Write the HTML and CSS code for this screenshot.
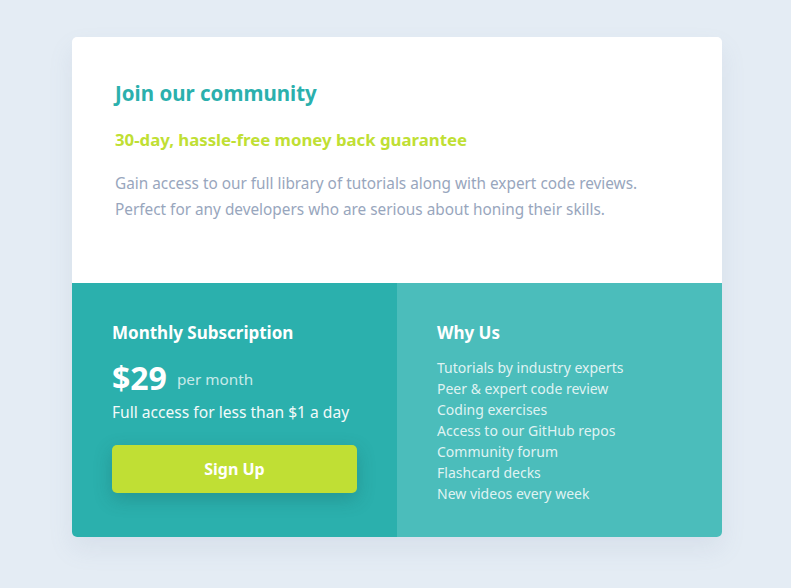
FILE: index.html
```html
<!DOCTYPE html>
<html lang="en">
<head>
<meta charset="utf-8">
<title>Single price grid</title>
<link rel="stylesheet" href="styles.css">
</head>
<body>
<div class="page">
  <main class="card">
    <section class="intro">
      <h1 class="title">Join our community</h1>
      <h2 class="subtitle">30-day, hassle-free money back guarantee</h2>
      <p class="desc">Gain access to our full library of tutorials along with expert code reviews.<br>Perfect for any developers who are serious about honing their skills.</p>
    </section>
    <div class="bottom">
      <section class="subscription">
        <h3 class="col-title">Monthly Subscription</h3>
        <div class="price-row">
          <span class="price">$29</span>
          <span class="per">per month</span>
        </div>
        <p class="access">Full access for less than $1 a day</p>
        <button class="btn" type="button">Sign Up</button>
      </section>
      <section class="why">
        <h3 class="col-title">Why Us</h3>
        <ul class="list">
          <li>Tutorials by industry experts</li>
          <li>Peer &amp; expert code review</li>
          <li>Coding exercises</li>
          <li>Access to our GitHub repos</li>
          <li>Community forum</li>
          <li>Flashcard decks</li>
          <li>New videos every week</li>
        </ul>
      </section>
    </div>
  </main>
</div>
</body>
</html>
```
FILE: styles.css
```css
* { box-sizing: border-box; }
html, body { margin: 0; padding: 0; }
body {
  background: #e4ecf4;
  font-family: "Noto Sans", "Open Sans", sans-serif;
  width: 791px;
  height: 588px;
  overflow: hidden;
}
.page { padding: 37px 0 0 72px; }
.card {
  width: 650px;
  border-radius: 5px;
  overflow: hidden;
  background: #fff;
  box-shadow: 0 12px 24px rgba(120, 140, 170, 0.12);
}
.intro { padding: 44px 43px 61px; }
.title {
  margin: 0;
  font-size: 20.5px;
  line-height: 24px;
  font-weight: 700;
  color: #2bb0ad;
}
.subtitle {
  margin: 23px 0 0;
  font-size: 16.8px;
  line-height: 24px;
  font-weight: 700;
  color: #c0df34;
}
.desc {
  margin: 18px 0 0;
  font-size: 15.35px;
  line-height: 26px;
  color: #98a6bd;
}
.bottom {
  display: grid;
  grid-template-columns: 325px 325px;
}
.subscription {
  background: #2bb0ad;
  padding: 38px 40px 44px;
  color: #fff;
}
.why {
  background: #4bbdbb;
  padding: 38px 40px 30px;
  color: #fff;
}
.col-title {
  margin: 0;
  font-size: 17px;
  line-height: 24px;
  font-weight: 700;
}
.price-row {
  margin-top: 13px;
  display: flex;
  align-items: center;
  gap: 10px;
  height: 40px;
}
.price {
  font-size: 32px;
  font-weight: 700;
  line-height: 40px;
}
.per {
  font-size: 15.3px;
  color: rgba(240, 250, 250, 0.8);
  padding-top: 2px;
}
.access {
  margin: 3px 0 0;
  font-size: 15.6px;
  line-height: 22px;
  color: #f2fafa;
}
.btn {
  display: block;
  margin-top: 22px;
  width: 245px;
  height: 48px;
  border: 0;
  border-radius: 5px;
  background: #c0df34;
  color: #fff;
  font-family: inherit;
  font-size: 16px;
  font-weight: 700;
  box-shadow: 0 6px 18px rgba(20, 80, 80, 0.28);
}
.list {
  list-style: none;
  margin: 12px 0 0;
  padding: 0;
  font-size: 14px;
  line-height: 21px;
  color: rgba(255, 255, 255, 0.84);
}
```
